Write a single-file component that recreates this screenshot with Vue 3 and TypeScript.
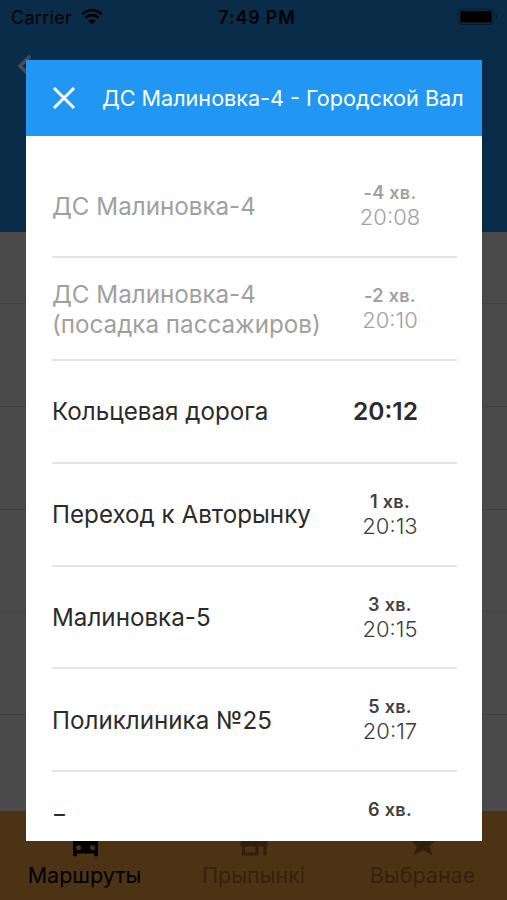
<script setup lang="ts">
interface Stop {
  name: string
  minutes?: string
  time: string
  state: 'past' | 'current' | 'next'
}

const stops: Stop[] = [
  { name: 'ДС Малиновка-4', minutes: '-4 хв.', time: '20:08', state: 'past' },
  { name: 'ДС Малиновка-4 (посадка пассажиров)', minutes: '-2 хв.', time: '20:10', state: 'past' },
  { name: 'Кольцевая дорога', time: '20:12', state: 'current' },
  { name: 'Переход к Авторынку', minutes: '1 хв.', time: '20:13', state: 'next' },
  { name: 'Малиновка-5', minutes: '3 хв.', time: '20:15', state: 'next' },
  { name: 'Поликлиника №25', minutes: '5 хв.', time: '20:17', state: 'next' },
  { name: 'Газета', minutes: '6 хв.', time: '20:18', state: 'next' },
]
</script>

<template>
  <div class="screen">
    <div class="page">
      <header class="appbar">
        <div class="status">
          <div class="carrier">
            <span>Carrier</span>
            <svg class="wifi" viewBox="0 0 22 16" width="22" height="16">
              <path d="M1.2 5.2a14 14 0 0 1 19.6 0M4.5 8.8a9.2 9.2 0 0 1 13 0" fill="none" stroke="#000" stroke-width="2.7" />
              <path d="M11 15.6 7.2 11.8a5.4 5.4 0 0 1 7.6 0z" />
            </svg>
          </div>
          <span class="clock">7:49 PM</span>
          <svg class="battery" viewBox="0 0 42 18" width="42" height="18">
            <rect x="1" y="1" width="36" height="15.5" rx="4" fill="none" stroke="#000" stroke-opacity=".4" />
            <rect x="3" y="3" width="32" height="11.5" rx="1.5" />
            <path d="M39 6q3 2.7 0 5.5z" fill-opacity=".4" />
          </svg>
        </div>
        <svg class="back" viewBox="0 0 16 24" width="16" height="24">
          <path d="M13 2 3 12l10 10" fill="none" stroke="#fff" stroke-width="3.2" />
        </svg>
      </header>
      <main class="list">
        <div class="list-head"></div>
        <div v-for="n in 4" :key="n" class="list-row"></div>
      </main>
      <nav class="tabs">
        <div class="tab active">
          <svg viewBox="0 0 28 28" width="28" height="28">
            <path fill-rule="evenodd" d="M6 3h16q1 0 1.500 1L27 12.500V25q0 1.200-1.200 1.200h-1.600q-1.200 0-1.200-1.200v-1.500H6V25q0 1.200-1.200 1.200H3.200Q2 26.200 2 25V12.500L4.500 4Q5 3 6 3M7.500 15.300a2.500 2.500 0 1 0 .01 5a2.500 2.500 0 0 0 0-5M21.500 15.300a2.500 2.500 0 1 0 .01 5a2.500 2.500 0 0 0 0-5M6.500 5.500 4.700 10h19.600l-2-4.500z" />
          </svg>
          <span>Маршруты</span>
        </div>
        <div class="tab">
          <svg viewBox="0 0 28 28" width="28" height="28">
            <path fill-rule="evenodd" d="M2 3h24v3H2zM2 7.500h24l1.500 6v3H26.500V25.500h-3V16.500h-5V25.500H2V16.500H.5v-3zM5 16.500v6h10.500v-6z" />
          </svg>
          <span>Прыпынкі</span>
        </div>
        <div class="tab">
          <svg viewBox="0 0 28 28" width="28" height="28">
            <path d="m14 1 3.500 9H27l-6.700 6.500L23.500 25.500 14 20.200 4.500 25.500 7.700 16.500 1 10h9.500z" />
          </svg>
          <span>Выбранае</span>
        </div>
      </nav>
    </div>

    <div class="overlay">
      <section class="dialog">
        <header class="dialog-head">
          <svg viewBox="0 0 24 24" width="24" height="24">
            <path d="m2 2 20 20M22 2 2 22" stroke="#fff" stroke-width="3" />
          </svg>
          <h1>ДС Малиновка-4 - Городской Вал</h1>
        </header>
        <div class="stops">
          <div v-for="(stop, i) in stops" :key="i" class="stop" :class="stop.state">
            <div class="name">{{ stop.name }}</div>
            <div class="when">
              <div v-if="stop.minutes" class="minutes">{{ stop.minutes }}</div>
              <div class="time">{{ stop.time }}</div>
            </div>
          </div>
        </div>
      </section>
    </div>
  </div>
</template>

<style>
body {
  margin: 0;
}
</style>

<style scoped>
* {
  box-sizing: border-box;
}
.screen {
  position: relative;
  width: 507px;
  height: 900px;
  overflow: hidden;
  font-family: Inter, 'Liberation Sans', sans-serif;
}
.page {
  display: flex;
  flex-direction: column;
  height: 100%;
}
.appbar {
  flex: none;
  height: 232px;
  background: #2196f3;
}
.status {
  display: grid;
  grid-template-columns: 1fr auto 1fr;
  align-items: center;
  height: 34px;
  padding: 0 8px 0 11px;
  font-size: 18px;
}
.carrier {
  display: flex;
  align-items: center;
  gap: 9px;
  letter-spacing: 0.3px;
}
.clock {
  padding-left: 4px;
  font-weight: 600;
  letter-spacing: 0.8px;
}
.battery {
  justify-self: end;
}
.back {
  display: block;
  margin: 20px 0 0 17px;
}
.list {
  flex: 1;
  min-height: 0;
  overflow: hidden;
  background: #f7f7f7;
}
.list-head {
  height: 72px;
  border-bottom: 1px solid #d8d8d8;
}
.list-row {
  height: 102.8px;
  border-bottom: 1px solid #d8d8d8;
}
.tabs {
  display: grid;
  flex: none;
  grid-template-columns: repeat(3, 1fr);
  height: 89px;
  background: #ffab40;
}
.tab {
  display: flex;
  flex-direction: column;
  align-items: center;
  gap: 4px;
  padding-top: 19px;
  font-size: 21.5px;
  line-height: 27px;
  color: #b56f2c;
  fill: #a5642a;
}
.tab.active {
  color: #000;
  fill: #000;
}
.overlay {
  position: absolute;
  inset: 0;
  padding: 60px 25px 59px 26px;
  background: rgba(0, 0, 0, 0.7);
}
.dialog {
  display: flex;
  flex-direction: column;
  height: 781px;
  padding-bottom: 25px;
  background: #fff;
}
.dialog-head {
  display: flex;
  align-items: center;
  gap: 26px;
  flex: none;
  height: 76px;
  padding-left: 26px;
  background: #2196f3;
}
h1 {
  margin: 0;
  font-size: 21.6px;
  font-weight: 400;
  white-space: nowrap;
  color: #fff;
}
.stops {
  flex: 1;
  min-height: 0;
  overflow: hidden;
  padding: 19.500px 25px 0 26px;
}
.stop {
  display: flex;
  align-items: center;
  height: 102.8px;
  border-bottom: 2px solid #e4e4e4;
  color: #2b2b2b;
}
.name {
  width: 273px;
  padding-top: 2px;
  font-size: 24.2px;
  line-height: 30px;
}
.when {
  width: 130px;
  padding-bottom: 1px;
  text-align: center;
}
.minutes {
  font-size: 18px;
  font-weight: 600;
  line-height: 25px;
  letter-spacing: 0.3px;
  color: #404040;
}
.time {
  font-size: 22px;
  font-weight: 300;
  line-height: 25px;
  color: #3c3c3c;
}
.current .when {
  padding: 1px 9px 0 0;
}
.current .time {
  font-size: 24.5px;
  font-weight: 600;
  color: #2b2b2b;
}
.past,
.past .minutes,
.past .time {
  color: #a0a0a0;
}
</style>
